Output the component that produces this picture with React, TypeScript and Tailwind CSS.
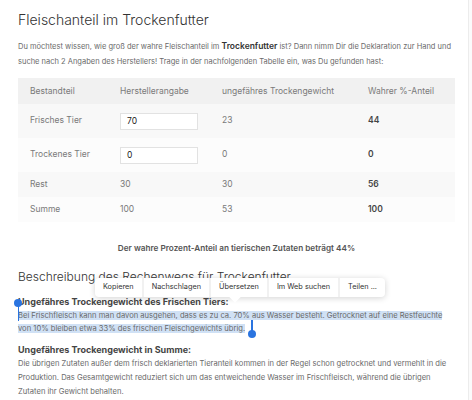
import React from 'react';

// ─────────────────────────────────────────────────────────────────────────────
// Rechner-Daten
// ─────────────────────────────────────────────────────────────────────────────

interface Row {
  label: string;
  hersteller: string | number;
  input?: boolean;
  trocken: number;
  anteil: number;
  shaded: boolean;
}

const ROWS: Row[] = [
  { label: 'Frisches Tier', hersteller: '70', input: true, trocken: 23, anteil: 44, shaded: true },
  { label: 'Trockenes Tier', hersteller: '0', input: true, trocken: 0, anteil: 0, shaded: false },
  { label: 'Rest', hersteller: 30, trocken: 30, anteil: 56, shaded: true },
  { label: 'Summe', hersteller: 100, trocken: 53, anteil: 100, shaded: false },
];

const MENU_ITEMS = ['Kopieren', 'Nachschlagen', 'Übersetzen', 'Im Web suchen', 'Teilen ...'];

export default function App() {
  return (
    <div
      className="flex w-[472px] h-[400px] overflow-hidden bg-white text-[#666]"
      style={{ fontFamily: 'Inter, "Liberation Sans", sans-serif' }}
    >
      <div className="w-[468px] shrink-0 pl-[18px] pr-[13px] pt-[10px]">
        {/* Header */}
        <h1 className="text-[14px] leading-[20px] font-light text-[#333]">
          Fleischanteil im Trockenfutter
        </h1>
        <p className="mt-[9px] text-[7.5px] leading-[15px] text-[#6a6a6a]">
          Du möchtest wissen, wie groß der wahre Fleischanteil im{' '}
          <span className="text-[8.5px] font-semibold text-[#333]">Trockenfutter</span> ist? Dann nimm
          Dir die Deklaration zur Hand und suche nach 2 Angaben des Herstellers! Trage in der
          nachfolgenden Tabelle ein, was Du gefunden hast:
        </p>

        {/* Tabelle */}
        <table className="mt-[9px] w-[437px] table-fixed border-collapse text-[8.5px] leading-[11px] text-[#7a7a7a]">
          <colgroup>
            <col className="w-[90px]" />
            <col className="w-[102px]" />
            <col className="w-[146px]" />
            <col className="w-[99px]" />
          </colgroup>
          <thead>
            <tr className="h-[26px] bg-[#f1f1f1] text-left">
              <th className="pl-[12px] font-normal">Bestandteil</th>
              <th className="pl-[12px] font-normal">Herstellerangabe</th>
              <th className="pl-[12px] font-normal">ungefähres Trockengewicht</th>
              <th className="pl-[12px] font-normal">Wahrer %-Anteil</th>
            </tr>
          </thead>
          <tbody>
            {ROWS.map((r) => {
              const pad = r.input ? 'pt-[9px] pb-[8px]' : 'py-[7px]';
              return (
                <tr key={r.label} className={r.shaded ? 'bg-[#f8f8f8]' : 'bg-[#fcfcfc]'}>
                  <td className={`pl-[12px] align-top ${pad}`}>
                    <div className={r.input ? 'pt-[2px]' : ''}>{r.label}</div>
                  </td>
                  <td className={`pl-[12px] align-top ${pad}`}>
                    {r.input ? (
                      <div className="w-[78px] h-[17px] border border-[#e2e2e2] bg-white pl-[6px] flex items-center text-[8.5px] text-[#222]">
                        {r.hersteller}
                      </div>
                    ) : (
                      r.hersteller
                    )}
                  </td>
                  <td className={`pl-[12px] align-top ${pad}`}>
                    <div className={r.input ? 'pt-[2px]' : ''}>{r.trocken}</div>
                  </td>
                  <td className={`pl-[12px] align-top font-semibold text-[#444] ${pad}`}>
                    <div className={r.input ? 'pt-[2px]' : ''}>{r.anteil}</div>
                  </td>
                </tr>
              );
            })}
          </tbody>
        </table>

        <p className="mt-[19px] w-[437px] text-center text-[8.2px] leading-[14px] font-semibold text-[#555]">
          Der wahre Prozent-Anteil an tierischen Zutaten beträgt 44%
        </p>

        {/* Beschreibung */}
        <div className="relative mt-[14px]">
          <h2 className="text-[12px] leading-[16px] font-light text-[#333]">
            Beschreibung des Rechenwegs für Trockenfutter
          </h2>

          {/* Kontextmenü */}
          <div className="absolute left-[77px] top-[9px] flex h-[19px] items-stretch rounded-[4px] bg-white shadow-[0_1px_6px_rgba(0,0,0,0.18)] text-[7.3px] text-[#333]">
            {MENU_ITEMS.map((m, i) => (
              <div
                key={m}
                className={`flex items-center px-[8px] ${i > 0 ? 'border-l-[2px] border-[#f1f1f1]' : ''}`}
              >
                {m}
              </div>
            ))}
            <div className="absolute left-[136px] -bottom-[4px] h-[8px] w-[8px] rotate-45 bg-white" />
          </div>

          <div className="relative mt-[10px] text-[7.6px] leading-[13.5px] text-[#6a6a6a]">
            <p className="text-[9px] font-bold text-[#444]">
              Ungefähres Trockengewicht des Frischen Tiers:
            </p>
            <p>
              <span className="bg-[#d0e1f5]">
                Bei Frischfleisch kann man davon ausgehen, dass es zu ca. 70% aus Wasser besteht.
                Getrocknet auf eine Restfeuchte von 10% bleiben etwa 33% des frischen Fleischgewichts
                übrig.
              </span>
            </p>
            {/* Auswahl-Griffe */}
            <div className="absolute left-[-4px] top-[4px] h-[8px] w-[8px] rounded-full bg-[#2a74e0]" />
            <div className="absolute left-[-0.5px] top-[9px] h-[17px] w-[1.5px] bg-[#2a74e0]" />
            <div className="absolute left-[233px] top-[25px] h-[12px] w-[1.5px] bg-[#2a74e0]" />
            <div className="absolute left-[230px] top-[35px] h-[8px] w-[8px] rounded-full bg-[#2a74e0]" />
          </div>

          <div className="mt-[7px] text-[7.6px] leading-[14px] text-[#6a6a6a]">
            <p className="text-[9px] font-bold text-[#444]">Ungefähres Trockengewicht in Summe:</p>
            <p>
              Die übrigen Zutaten außer dem frisch deklarierten Tieranteil kommen in der Regel schon
              getrocknet und vermehlt in die Produktion. Das Gesamtgewicht reduziert sich um das
              entweichende Wasser im Frischfleisch, während die übrigen Zutaten ihr Gewicht behalten.
            </p>
          </div>
        </div>
      </div>
      <div className="w-[1px] shrink-0 bg-[#ececec]" />
      <div className="flex-1 bg-[#fbfbfb]" />
    </div>
  );
}
